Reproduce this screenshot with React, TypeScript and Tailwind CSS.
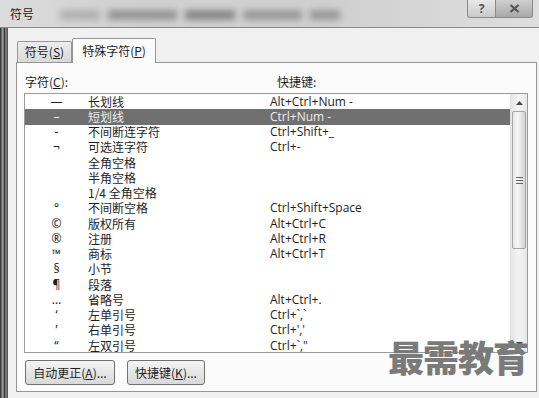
import React from "react";

const rows: [string, string, string][] = [
  ["—", "长划线", "Alt+Ctrl+Num -"],
  ["–", "短划线", "Ctrl+Num -"],
  ["‑", "不间断连字符", "Ctrl+Shift+_"],
  ["¬", "可选连字符", "Ctrl+-"],
  ["", "全角空格", ""],
  ["", "半角空格", ""],
  ["", "1/4 全角空格", ""],
  ["°", "不间断空格", "Ctrl+Shift+Space"],
  ["©", "版权所有", "Alt+Ctrl+C"],
  ["®", "注册", "Alt+Ctrl+R"],
  ["™", "商标", "Alt+Ctrl+T"],
  ["§", "小节", ""],
  ["¶", "段落", ""],
  ["…", "省略号", "Alt+Ctrl+."],
  ["‘", "左单引号", "Ctrl+`,`"],
  ["’", "右单引号", "Ctrl+','"],
  ["“", "左双引号", "Ctrl+`,\""],
];

export default function App() {
  return (
    <div
      className="w-[539px] h-[398px] flex flex-col overflow-hidden relative bg-[#f0f0f0] text-[#1e1e1e]"
      style={{ fontFamily: '"Noto Sans", "Noto Sans CJK SC", sans-serif' }}
    >
      {/* title bar */}
      <div className="h-[28px] flex items-start relative bg-[linear-gradient(to_right,#dcdcdc,#d2d2d2_20%,#cfcfcf_60%,#dedede)] border-b border-[#8a8a8a] shrink-0">
        <div className="absolute left-[60px] top-[10px] w-[280px] h-[10px] flex gap-[8px] blur-[3px]">
          <div className="w-[40px] h-full bg-[#b0b0b0]" />
          <div className="w-[70px] h-full bg-[#959595]" />
          <div className="w-[50px] h-full bg-[#888]" />
          <div className="w-[60px] h-full bg-[#9a9a9a]" />
          <div className="w-[30px] h-full bg-[#999]" />
        </div>
        <span
          className="relative ml-[10px] mt-[6px] text-[12px] leading-[16px] text-[#222]"
          style={{ fontFamily: '"Noto Sans CJK SC", sans-serif' }}
        >
          符号
        </span>
        <div className="ml-auto mr-[6px] flex relative">
          <div className="w-[29px] h-[18px] border border-[#8a8a8a] border-t-0 rounded-bl-[3px] bg-[linear-gradient(to_bottom,#e8e8e8,#c9c9c9)] flex items-center justify-center text-[12px] font-bold text-[#555]">
            ?
          </div>
          <div className="w-[37px] h-[18px] border border-l-0 border-[#8a8a8a] border-t-0 rounded-br-[3px] bg-[linear-gradient(to_bottom,#cfcfcf,#a8a8a8)] flex items-center justify-center">
            <svg width="11" height="9" viewBox="0 0 11 9">
              <path d="M1.5 1 L9.5 8 M9.5 1 L1.5 8" stroke="#555" strokeWidth="2.2" />
            </svg>
          </div>
        </div>
      </div>

      <div className="flex flex-1">
        {/* left frame */}
        <div className="w-[8px] bg-[linear-gradient(to_right,#2c2c2c,#6a6a6a_20%,#a8a8a8_35%,#3a3a3a_55%,#8a8a8a_75%,#4a4a4a)]" />
        {/* client */}
        <div className="flex-1 flex flex-col pl-[8px] pr-[2px] pt-[10px] pb-[6px] bg-[#f0f0f0]">
          {/* tabs */}
          <div className="flex items-end h-[24px] relative z-10">
            <div className="w-[55px] h-[21px] border border-[#969696] border-b-0 rounded-t-[2px] bg-[linear-gradient(to_bottom,#ececec,#d9d9d9)] flex items-center justify-center text-[12px] ml-[1px]">
              <span style={{ fontFamily: '"Noto Sans CJK SC", sans-serif' }}>符号(<span className="underline">S</span>)</span>
            </div>
            <div className="w-[84px] h-[25px] -mb-px border border-[#969696] border-b-0 rounded-t-[2px] bg-[#fbfbfb] flex items-center justify-center text-[12px] pb-[1px]">
              <span style={{ fontFamily: '"Noto Sans CJK SC", sans-serif' }}>特殊字符(<span className="underline">P</span>)</span>
            </div>
          </div>
          {/* panel */}
          <div className="flex-1 border border-[#969696] bg-[#fbfbfb] flex flex-col pl-[7px] pr-[8px] pt-[11px]">
            <div className="h-[16px] flex items-center text-[12px]" style={{ fontFamily: '"Noto Sans CJK SC", sans-serif' }}>
              <span className="ml-[1px] w-[252px]">字符(<span className="underline">C</span>):</span>
              <span>快捷键:</span>
            </div>
            <div className="mt-[3px] h-[260px] border border-[#9a9a9a] bg-white flex overflow-hidden">
              <div className="flex-1 flex flex-col overflow-hidden">
                {rows.map(([sym, name, key], i) => {
                  const sel = i === 1;
                  return (
                    <div
                      key={i}
                      className={`h-[15.25px] shrink-0 flex items-center text-[12px] leading-[14px] overflow-hidden ${sel ? "bg-[#707070] text-[#ececec]" : ""}`}
                    >
                      <span className="w-[63px] text-center leading-[14px]" style={{ fontFamily: '"Noto Sans", sans-serif' }}>{sym}</span>
                      <span className="w-[182px] leading-[14px]" style={{ fontFamily: '"Noto Sans CJK SC", sans-serif' }}>{name}</span>
                      <span style={{ fontFamily: '"Open Sans", "Noto Sans", sans-serif' }} className="text-[12px] leading-[14px]">{key}</span>
                    </div>
                  );
                })}
              </div>
              {/* scrollbar */}
              <div className="w-[17px] flex flex-col bg-[linear-gradient(to_right,#e6e6e6,#f4f4f4,#e6e6e6)] border-l border-[#e0e0e0]">
                <div className="h-[17px] flex items-center justify-center">
                  <svg width="7" height="4" viewBox="0 0 7 4"><path d="M0 4 L3.5 0 L7 4 Z" fill="#444" /></svg>
                </div>
                <div className="mx-[1px] h-[138px] rounded-[2px] border border-[#a5a5a5] bg-[linear-gradient(to_right,#e8e8e8,#f6f6f6_40%,#d4d4d4)] flex items-center justify-center">
                  <div className="flex flex-col gap-[2px]">
                    <div className="w-[7px] h-px bg-[#666]" />
                    <div className="w-[7px] h-px bg-[#666]" />
                    <div className="w-[7px] h-px bg-[#666]" />
                  </div>
                </div>
                <div className="flex-1" />
                <div className="h-[17px] flex items-center justify-center">
                  <svg width="7" height="4" viewBox="0 0 7 4"><path d="M0 0 L3.5 4 L7 0 Z" fill="#444" /></svg>
                </div>
              </div>
            </div>
            <div className="mt-[7px] flex gap-[12px] text-[12px]" style={{ fontFamily: '"Noto Sans CJK SC", sans-serif' }}>
              <div className="w-[90px] h-[25px] ml-[1px] border border-[#707070] rounded-[3px] bg-[linear-gradient(to_bottom,#f4f4f4,#e6e6e6_50%,#d8d8d8)] flex items-center justify-center">
                自动更正(<span className="underline">A</span>)...
              </div>
              <div className="w-[78px] h-[25px] border border-[#707070] rounded-[3px] bg-[linear-gradient(to_bottom,#f4f4f4,#e6e6e6_50%,#d8d8d8)] flex items-center justify-center">
                快捷键(<span className="underline">K</span>)...
              </div>
            </div>
          </div>
        </div>
      </div>

      {/* watermark */}
      <div
        className="absolute left-[388px] top-[335px] text-[36px] leading-[42px] font-black text-[#7a7a7a] tracking-[-1px]"
        style={{ fontFamily: '"Noto Sans CJK SC", sans-serif' }}
      >
        最需教育
      </div>
    </div>
  );
}
